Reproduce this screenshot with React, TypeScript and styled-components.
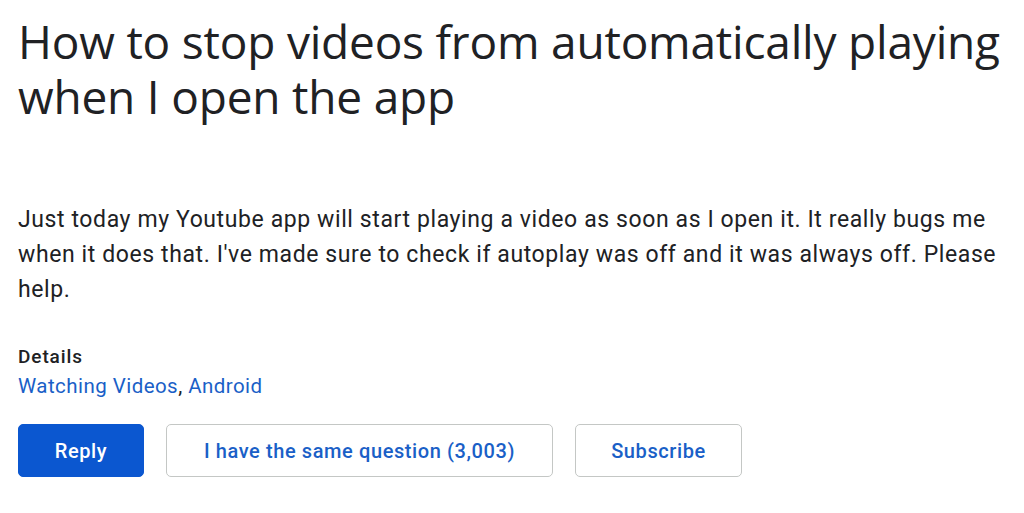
import React from "react";
import styled, { createGlobalStyle } from "styled-components";

const Global = createGlobalStyle`
  html, body { margin: 0; padding: 0; background: #fff; }
  body { font-family: Roboto, "Noto Sans", Arial, sans-serif; color: #202124; }
`;

const Page = styled.main`
  padding: 14px 18px 0 18px;
  width: 1024px;
  box-sizing: border-box;
`;

const Title = styled.h1`
  margin: 0;
  font-family: "Open Sans", Roboto, sans-serif;
  font-weight: 400;
  font-size: 46px;
  line-height: 55px;
  letter-spacing: -0.2px;
  color: #202124;
`;

const Body = styled.p`
  margin: 78px 0 0 0;
  font-size: 23px;
  letter-spacing: 0.6px;
  line-height: 35px;
  color: #202124;
  max-width: 985px;
`;

const DetailsLabel = styled.div`
  margin-top: 36px;
  font-size: 19px;
  letter-spacing: 0.9px;
  line-height: 28px;
  font-weight: 500;
  color: #202124;
`;

const Links = styled.div`
  font-size: 20.5px;
  letter-spacing: 0.45px;
  line-height: 30px;
  color: #202124;
`;

const Link = styled.a`
  color: #1a5fc7;
  text-decoration: none;
`;

const Actions = styled.div`
  display: flex;
  gap: 22px;
  margin-top: 23px;
`;

const Button = styled.button<{ $primary?: boolean; $w: number }>`
  box-sizing: border-box;
  width: ${(p) => p.$w}px;
  height: 53px;
  border-radius: 5px;
  font-family: Roboto, sans-serif;
  font-size: 20px;
  letter-spacing: 0.6px;
  font-weight: 500;
  cursor: pointer;
  border: 1.5px solid ${(p) => (p.$primary ? "#0b57d0" : "#c4c7c5")};
  background: ${(p) => (p.$primary ? "#0b57d0" : "#fff")};
  color: ${(p) => (p.$primary ? "#fff" : "#1a5fc7")};
`;

export default function App() {
  return (
    <>
      <Global />
      <Page>
        <Title>How to stop videos from automatically playing when I open the app</Title>
        <Body>
          Just today my Youtube app will start playing a video as soon as I open it. It really bugs me
          when it does that. I've made sure to check if autoplay was off and it was always off. Please
          help.
        </Body>
        <DetailsLabel>Details</DetailsLabel>
        <Links>
          <Link href="#">Watching Videos</Link>, <Link href="#">Android</Link>
        </Links>
        <Actions>
          <Button $primary $w={126}>Reply</Button>
          <Button $w={387}>I have the same question (3,003)</Button>
          <Button $w={167}>Subscribe</Button>
        </Actions>
      </Page>
    </>
  );
}
